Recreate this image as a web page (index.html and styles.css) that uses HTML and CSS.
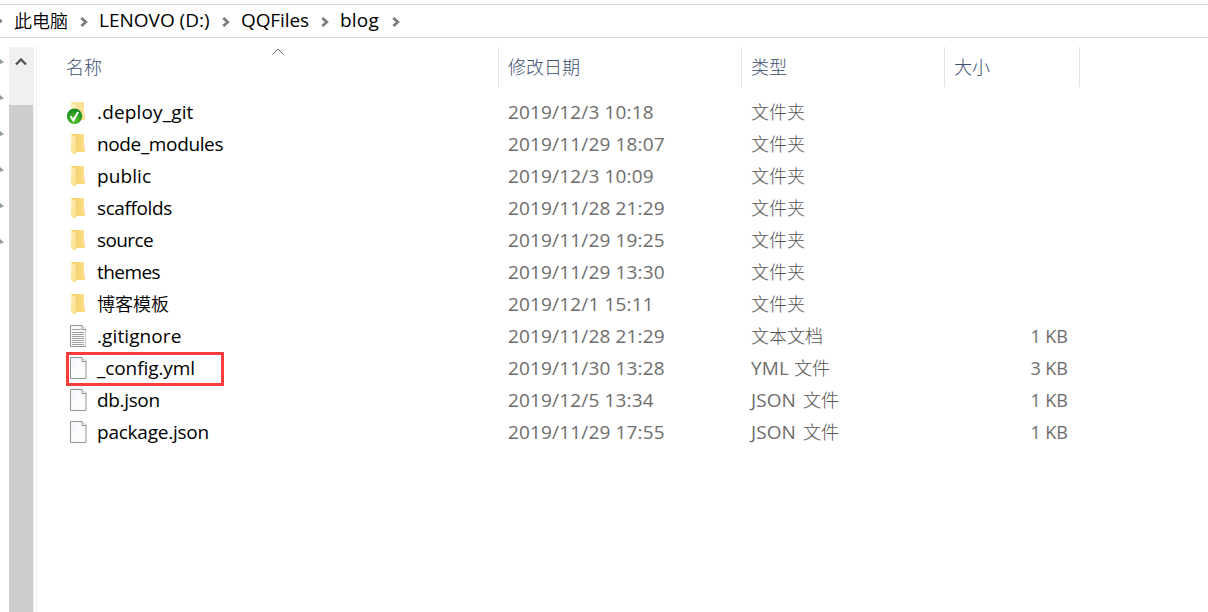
FILE: index.html
```html
<!DOCTYPE html>
<html lang="zh-CN">
<head>
<meta charset="utf-8">
<title>blog</title>
<link rel="stylesheet" href="styles.css">
</head>
<body>
<svg width="0" height="0" class="defs">
  <defs>
    <linearGradient id="gf" x1="0" x2="1"><stop offset="0" stop-color="#efcb66"/><stop offset="1" stop-color="#ffe08a"/></linearGradient>
    <linearGradient id="gl" x1="0" x2="1" y1="0" y2="1"><stop offset="0" stop-color="#fff0b8"/><stop offset="1" stop-color="#fbdc87"/></linearGradient>
    <linearGradient id="gp" x1="0" x2="1" y1="0" y2="1"><stop offset="0" stop-color="#f3f6f9"/><stop offset="1" stop-color="#ffffff"/></linearGradient>
    <radialGradient id="gg" cx=".5" cy=".75" r=".7"><stop offset="0" stop-color="#5cc32c"/><stop offset="1" stop-color="#178a22"/></radialGradient>
    <symbol id="folder" viewBox="0 0 20 24"><path d="M5 2h13v12.500l1 .8v4.700H5z" fill="url(#gf)"/><path d="M5 2l5 3.500v17.500l-5-2.500z" fill="url(#gl)"/></symbol>
    <symbol id="synced" viewBox="0 0 20 24"><path d="M5 2h13v12.500l1 .8v4.700H5z" fill="#fde195"/><path d="M5 2l5 3.500v8H5z" fill="#fff0b8"/><circle cx="8.500" cy="16.300" r="7.700" fill="url(#gg)"/><path d="M4.500 16.300l2.800 4 4.800-8.300" fill="none" stroke="#fff" stroke-width="2"/></symbol>
    <symbol id="page" viewBox="0 0 20 24"><path d="M4.500 1.500h11.500l4 4v17H4.500z" fill="url(#gp)" stroke="#949494"/><path d="M16 1.500v4h4" fill="#eee" stroke="#949494"/></symbol>
    <symbol id="text" viewBox="0 0 20 24"><use href="#page"/><path d="M6 5.500h9M6 8.500h12M6 10.500h12M6 12.500h12M6 14.500h12M6 16.500h12M6 18.500h12M6 20.500h12" stroke="#a0a0a0"/></symbol>
    <symbol id="chev" viewBox="0 0 8 10"><path d="M1.300 .9L5.800 5 1.300 9.100" fill="none" stroke="#7d7d7d" stroke-width="2.700"/></symbol>
    <symbol id="pin" viewBox="0 0 4 8"><path d="M0 1l4 3.300L0 6z" fill="#8d9aa3"/></symbol>
  </defs>
</svg>
<header class="address">
  <svg class="edge" viewBox="0 0 14 10"><path d="M0 2.500L2.500 5 0 7.500z" fill="#7d7d7d"/></svg>
  <span class="crumb c1">此电脑</span><svg class="sep"><use href="#chev"/></svg>
  <span class="crumb c2">LENOVO (D:)</span><svg class="sep"><use href="#chev"/></svg>
  <span class="crumb c3">QQFiles</span><svg class="sep"><use href="#chev"/></svg>
  <span class="crumb c4">blog</span><svg class="sep"><use href="#chev"/></svg>
</header>
<div class="body">
  <aside class="pins"><svg><use href="#pin"/></svg><svg><use href="#pin"/></svg><svg><use href="#pin"/></svg><svg><use href="#pin"/></svg><svg><use href="#pin"/></svg><svg><use href="#pin"/></svg></aside>
  <div class="scroll"><svg class="up" viewBox="0 0 12 10"><path d="M1 8.500l5-5 5 5" fill="none" stroke="#555" stroke-width="2.400"/></svg><div class="thumb"></div></div>
  <main class="files">
    <div class="row head">
      <div class="hname"><span class="zh">名称</span><svg class="sort" viewBox="0 0 12 7"><path d="M.5 6.500L6 1l5.500 5.500" fill="none" stroke="#666"/></svg></div>
      <div class="date zh">修改日期</div><div class="type zh">类型</div><div class="size zh">大小</div>
    </div>
    <div class="list">
      <div class="row"><div class="name"><svg><use href="#synced"/></svg><span class="n1">.deploy_git</span></div><div class="date">2019/12/3 10:18</div><div class="type zh">文件夹</div><div class="size"></div></div>
      <div class="row"><div class="name"><svg><use href="#folder"/></svg><span class="n2">node_modules</span></div><div class="date">2019/11/29 18:07</div><div class="type zh">文件夹</div><div class="size"></div></div>
      <div class="row"><div class="name"><svg><use href="#folder"/></svg><span class="n3">public</span></div><div class="date">2019/12/3 10:09</div><div class="type zh">文件夹</div><div class="size"></div></div>
      <div class="row"><div class="name"><svg><use href="#folder"/></svg><span class="n4">scaffolds</span></div><div class="date">2019/11/28 21:29</div><div class="type zh">文件夹</div><div class="size"></div></div>
      <div class="row"><div class="name"><svg><use href="#folder"/></svg><span class="n5">source</span></div><div class="date">2019/11/29 19:25</div><div class="type zh">文件夹</div><div class="size"></div></div>
      <div class="row"><div class="name"><svg><use href="#folder"/></svg><span class="n6">themes</span></div><div class="date">2019/11/29 13:30</div><div class="type zh">文件夹</div><div class="size"></div></div>
      <div class="row"><div class="name"><svg><use href="#folder"/></svg><span class="zh n7">博客模板</span></div><div class="date">2019/12/1 15:11</div><div class="type zh">文件夹</div><div class="size"></div></div>
      <div class="row"><div class="name"><svg><use href="#text"/></svg><span class="n8">.gitignore</span></div><div class="date">2019/11/28 21:29</div><div class="type zh">文本文档</div><div class="size">1 KB</div></div>
      <div class="row marked"><div class="name"><svg><use href="#page"/></svg><span class="n9">_config.yml</span></div><div class="date">2019/11/30 13:28</div><div class="type"><span class="yml">YML</span><span class="zh">文件</span></div><div class="size">3 KB</div></div>
      <div class="row"><div class="name"><svg><use href="#page"/></svg><span class="n10">db.json</span></div><div class="date">2019/12/5 13:34</div><div class="type"><span class="json">JSON</span><span class="zh">文件</span></div><div class="size">1 KB</div></div>
      <div class="row"><div class="name"><svg><use href="#page"/></svg><span class="n11">package.json</span></div><div class="date">2019/11/29 17:55</div><div class="type"><span class="json">JSON</span><span class="zh">文件</span></div><div class="size">1 KB</div></div>
    </div>
  </main>
</div>
</body>
</html>
```
FILE: styles.css
```css
*, *::after { box-sizing: border-box; }
body { margin: 0; padding-top: 4px; height: 612px; overflow: hidden; background: #fff; color: #000; font: 19px/32px "Open Sans", "Noto Sans CJK SC", sans-serif; white-space: nowrap; }
svg { display: block; flex: none; }
.defs { position: absolute; }
.zh { font-family: "Noto Sans CJK SC", sans-serif; font-size: 18px; font-weight: 300; line-height: 30px; }
.address { height: 34px; border-top: 1px solid #d9d9d9; border-bottom: 1px solid #d9d9d9; display: flex; align-items: center; }
.edge { width: 14px; height: 10px; }
.sep use { width: 8px; height: 10px; }
.sep { width: 8px; height: 10px; margin-top: 1px; }
.crumb { flex: none; line-height: 30px; padding-bottom: 2px; }
.c1 { width: 66px; font: 350 18px/30px "Noto Sans CJK SC", sans-serif; }
.c2 { width: 115px; margin-left: 11px; }
.c2 + .sep { margin-left: 8px; }
.c3 { width: 72px; margin-left: 11px; letter-spacing: -.1px; }
.c3 + .sep { margin-left: 8px; }
.c4 { width: 43px; margin-left: 11px; letter-spacing: .2px; }
.c4 + .sep { margin-left: 9px; }
.body { height: 574px; display: flex; }
.pins { width: 9px; padding-top: 20px; }
.pins svg { width: 4px; height: 8px; margin-bottom: 28px; }
.scroll { width: 25px; margin-top: 9px; background: #f0f0f0; }
.up { width: 12px; height: 10px; margin: 9px 0 0 6px; }
.thumb { width: 24px; height: 520px; margin-top: 39px; background: #cdcdcd; }
.files { flex: 1; margin-left: 2px; margin-top: 9px; border-left: 1px solid #f0f0f0; padding-left: 29px; }
.row { display: flex; height: 32px; }
.name { width: 442px; display: flex; align-items: center; }
.name svg { width: 24px; height: 24px; margin: 0 9px 0 -2px; overflow: visible; }
.name use { width: 20px; height: 24px; }
.date { width: 243px; color: #6d6d6d; letter-spacing: .16px; }
.type { width: 203px; color: #6d6d6d; display: flex; }
.list .type .zh, .list .type.zh { color: #555; }
.size { width: 114px; color: #6d6d6d; text-align: right; font-size: 18px; }
.head { height: 40px; }
.head .zh { line-height: 39px; }
.head .hname { width: 432px; color: #3a506e; display: flex; }
.head .date, .head .type, .head .size { color: #3a506e; border-left: 1px solid #e2e2e2; padding-left: 9px; text-align: left; letter-spacing: 0; }
.head .size { width: 136px; border-right: 1px solid #e2e2e2; }
.sort { width: 12px; height: 7px; margin: 1px 0 0 170px; }
.list { padding-top: 9px; }
.name .zh { font-weight: 350; line-height: 30px; padding-bottom: 2px; }
.yml { width: 43px; letter-spacing: .1px; }
.json { width: 52px; letter-spacing: .1px; }
.n1 { letter-spacing: .15px; }
.n2 { letter-spacing: -.37px; }
.n3 { letter-spacing: .1px; }
.n4 { letter-spacing: -.4px; }
.n5 { letter-spacing: -.6px; }
.n6 { letter-spacing: -.55px; }
.n8 { letter-spacing: .1px; }
.n9 { letter-spacing: -.08px; }
.n10 { letter-spacing: -.35px; }
.n11 { letter-spacing: -.23px; }
.marked .name { position: relative; }
.marked .name::after { content: ""; position: absolute; left: 0; top: 0; width: 158px; height: 34px; border: 3px solid #fa3c3c; }
```
